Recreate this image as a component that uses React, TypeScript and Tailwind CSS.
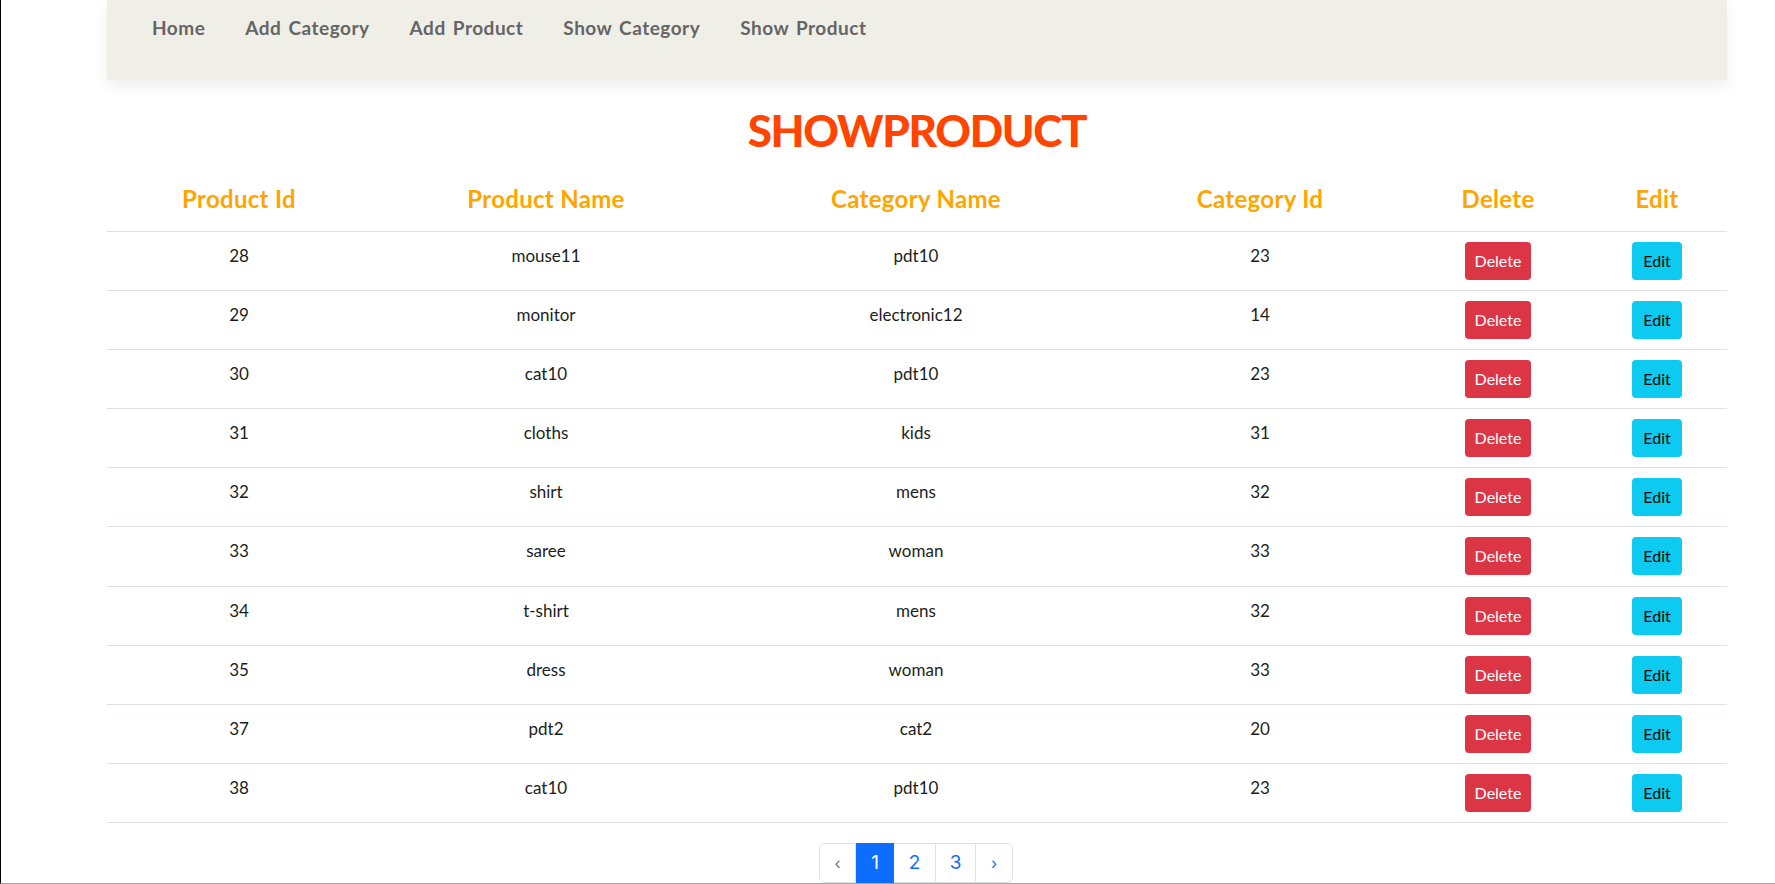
import React from "react";

const rows = [
  [28, "mouse11", "pdt10", 23],
  [29, "monitor", "electronic12", 14],
  [30, "cat10", "pdt10", 23],
  [31, "cloths", "kids", 31],
  [32, "shirt", "mens", 32],
  [33, "saree", "woman", 33],
  [34, "t-shirt", "mens", 32],
  [35, "dress", "woman", 33],
  [37, "pdt2", "cat2", 20],
  [38, "cat10", "pdt10", 23],
];

const font = { fontFamily: "Lato, 'Noto Sans', sans-serif" };

export default function App() {
  return (
    <div
      className="h-[884px] w-full overflow-hidden border-l border-black border-b border-b-[#a3a7ab] bg-white text-[#212529]"
      style={font}
    >
      <div className="ml-[106px] w-[1620px]">
        <nav className="h-[80px] bg-[#f0efe7] shadow-[0_6px_14px_rgba(0,0,0,0.07)] flex items-start pl-[45px] pt-[14px] gap-[40px]">
          {["Home", "Add Category", "Add Product", "Show Category", "Show Product"].map((l) => (
            <a
              key={l}
              className="text-[19px] font-bold leading-[28px] text-[#656565] tracking-[0.5px] [word-spacing:2px]"
            >
              {l}
            </a>
          ))}
        </nav>
        <h1 className="mt-[22px] h-[56px] text-center text-[44px] font-black leading-[56px] text-[#ff4500] tracking-[-1.3px]">
          SHOWPRODUCT
        </h1>
        <table className="w-full table-fixed border-collapse">
          <colgroup>
            <col className="w-[264px]" />
            <col className="w-[350px]" />
            <col className="w-[390px]" />
            <col className="w-[298px]" />
            <col className="w-[178px]" />
            <col className="w-[140px]" />
          </colgroup>
          <thead>
            <tr className="border-b border-[#dee2e6]">
              {["Product Id", "Product Name", "Category Name", "Category Id", "Delete", "Edit"].map((h) => (
                <th
                  key={h}
                  className="h-[73px] pt-[27px] align-top text-center text-[24px] font-bold leading-[28px] text-[#ffa500] tracking-[0.3px]"
                >
                  {h}
                </th>
              ))}
            </tr>
          </thead>
          <tbody>
            {rows.map((r) => (
              <tr key={r[0]} className="h-[59.2px] border-b border-[#dee2e6]">
                {r.map((c, i) => (
                  <td key={i} className="pt-[12px] align-top text-center text-[17px] leading-[24px] text-[#1b1e21]">
                    {c}
                  </td>
                ))}
                <td className="pt-[10px] align-top text-center">
                  <button className="h-[38px] w-[66px] rounded-[4px] bg-[#dc3545] text-[16px] text-white">
                    Delete
                  </button>
                </td>
                <td className="pt-[10px] align-top text-center">
                  <button className="h-[38px] w-[50px] rounded-[4px] bg-[#0dcaf0] text-[16px] text-black">
                    Edit
                  </button>
                </td>
              </tr>
            ))}
          </tbody>
        </table>
        <div className="mt-[20px] flex justify-center pr-[2px]">
          <div
            className="flex h-[40px] text-[19px] text-[#0d6efd]"
            style={{ fontFamily: "Inter, 'Noto Sans', sans-serif" }}
          >
            <span className="flex w-[37px] items-center justify-center rounded-l-[6px] border border-[#dee2e6] text-[#6c757d] text-[16px]">
              ‹
            </span>
            <span className="flex w-[38px] items-center justify-center border border-[#0d6efd] bg-[#0d6efd] text-white">
              1
            </span>
            <span className="flex w-[42px] items-center justify-center border border-l-0 border-[#dee2e6]">2</span>
            <span className="flex w-[40px] items-center justify-center border border-l-0 border-[#dee2e6]">3</span>
            <span className="flex w-[37px] items-center justify-center rounded-r-[6px] border border-l-0 border-[#dee2e6] text-[16px]">
              ›
            </span>
          </div>
        </div>
      </div>
    </div>
  );
}
